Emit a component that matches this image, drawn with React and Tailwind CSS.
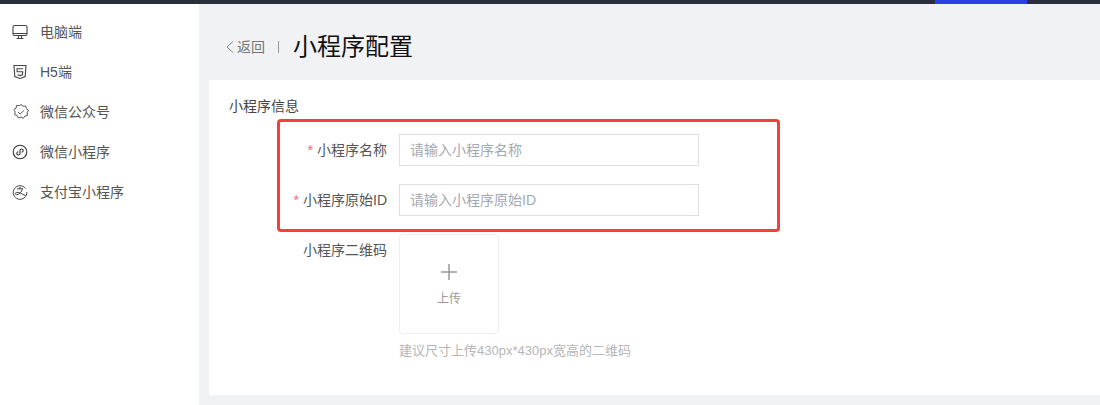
import React from 'react';

const FONT = '"Liberation Sans", "Noto Sans CJK SC", sans-serif';

const MonitorIcon = () => (
  <svg width="16" height="16" viewBox="0 0 16 16" fill="none" stroke="#444" strokeWidth="1.1">
    <rect x="1" y="1.500" width="14" height="10" rx="1.500" />
    <path d="M1 9.500h14M6.500 11.500v2.500M9.500 11.500v2.500M4.500 14.500h7" />
  </svg>
);

const Html5Icon = () => (
  <svg width="16" height="16" viewBox="0 0 16 16" fill="none" stroke="#444" strokeWidth="1.1">
    <path d="M2 1.500h12l-.8 11-5.200 2-5.200-2z" />
    <path d="M11 4.800H5l.2 3h5.500l-.2 3-2.500.8-2.500-.8" />
  </svg>
);

const WechatIcon = () => (
  <svg width="18" height="18" viewBox="0 0 18 18" fill="none" stroke="#555" strokeWidth="1">
    <path d="M9 1.500l2.100 1.700 2.700-.2.500 2.600 2.200 1.800-1.400 2.300.4 2.700-2.600.7-1.600 2.200-2.300-1.300-2.500 1-1.300-2.400-2.600-1 .6-2.600-1.300-2.400 2.200-1.600.6-2.600 2.600.3z" />
    <path d="M6 9l2.100 2.100 3.800-3.600" />
  </svg>
);

const MiniIcon = () => (
  <svg width="16" height="16" viewBox="0 0 16 16" fill="none" stroke="#333" strokeWidth="1.1">
    <circle cx="8" cy="8" r="6.800" />
    <path d="M8 6.800v2.600a1.600 1.600 0 1 1-1.600-1.600M8 9.200V6.600a1.600 1.600 0 1 1 1.600 1.600" />
  </svg>
);

const AlipayIcon = () => (
  <svg width="16" height="16" viewBox="0 0 16 16" fill="none" stroke="#444" strokeWidth="1">
    <path d="M13.500 4.500A6.800 6.800 0 1 0 14.800 8" />
    <path d="M5 4.800h6M8 2.800v2M10.300 4.800c-.6 3-2.700 5.600-5.600 5.900-1.700.1-2-2.100.1-2.300 2-.2 5 1.300 8.700 3.200" />
  </svg>
);

const menu = [
  { label: '电脑端', icon: <MonitorIcon /> },
  { label: 'H5端', icon: <Html5Icon /> },
  { label: '微信公众号', icon: <WechatIcon /> },
  { label: '微信小程序', icon: <MiniIcon /> },
  { label: '支付宝小程序', icon: <AlipayIcon /> },
];

function Field({ label, required, placeholder }) {
  return (
    <div className="flex h-[32px] items-center">
      <label className="w-[190px] shrink-0 pr-3 text-right text-[14px] text-[#555]">
        {required && <span className="mr-1 text-[#f56c6c]">*</span>}
        {label}
      </label>
      <input
        readOnly
        placeholder={placeholder}
        className="h-[32px] w-[300px] border border-[#dcdfe6] px-[10px] text-[14px] outline-none placeholder:text-[#a3a9b3]"
      />
    </div>
  );
}

export default function App() {
  return (
    <div className="relative flex h-[405px] w-[1100px] flex-col overflow-hidden bg-[#f1f2f4]" style={{ fontFamily: FONT }}>
      <div className="flex h-[4px] shrink-0 justify-end bg-[#2a2f3b] pr-[73px]">
        <div className="h-full w-[92px] bg-[#2a3ee8]" />
      </div>

      <div className="flex flex-1">
        <aside className="w-[199px] shrink-0 bg-white pt-[8px]">
          {menu.map((item) => (
            <div key={item.label} className="flex h-[40px] items-center pl-[12px] text-[14px] text-[#555]">
              <span className="flex w-[28px] shrink-0">{item.icon}</span>
              <span>{item.label}</span>
            </div>
          ))}
        </aside>

        <main className="flex flex-1 flex-col pl-[10px]">
          <div className="flex h-[76px] shrink-0 items-center pl-[16px] pt-[10px]">
            <svg width="10" height="14" viewBox="0 0 10 14" fill="none" stroke="#888" strokeWidth="1">
              <path d="M8 1.500L2 7l6 5.500" />
            </svg>
            <span className="ml-[2px] text-[14px] text-[#777]">返回</span>
            <span className="ml-[13px] mr-[14px] h-[12px] w-px bg-[#999]" />
            <h1 className="text-[24px] leading-[32px] text-[#111]">小程序配置</h1>
          </div>

          <section className="h-[315px] bg-white pl-[20px] pt-[16px]">
            <h2 className="text-[14px] leading-[20px] text-[#444]">小程序信息</h2>

            <div className="-ml-[20px] mt-[18px] flex flex-col gap-[18px]">
              <Field required label="小程序名称" placeholder="请输入小程序名称" />
              <Field required label="小程序原始ID" placeholder="请输入小程序原始ID" />
              <div className="flex">
                <label className="w-[190px] shrink-0 pr-3 pt-[6px] text-right text-[14px] leading-[20px] text-[#555]">
                  小程序二维码
                </label>
                <div>
                  <div className="flex h-[100px] w-[100px] flex-col items-center justify-center rounded-[4px] border border-[#eceef3] pt-[2px]">
                    <svg width="18" height="18" viewBox="0 0 18 18" stroke="#999" strokeWidth="1.500">
                      <path d="M9 1v16M1 9h16" />
                    </svg>
                    <span className="mt-[10px] text-[12px] leading-[16px] text-[#999]">上传</span>
                  </div>
                  <p className="mt-[8px] text-[13px] leading-[18px] text-[#b5b5b5]">建议尺寸上传430px*430px宽高的二维码</p>
                </div>
              </div>
            </div>
          </section>
        </main>
      </div>

      {/* highlight box drawn over the form */}
      <div className="pointer-events-none absolute left-[277px] top-[119px] h-[113px] w-[503px] rounded-[4px] border-[3px] border-[#f73e3e]" />
    </div>
  );
}
